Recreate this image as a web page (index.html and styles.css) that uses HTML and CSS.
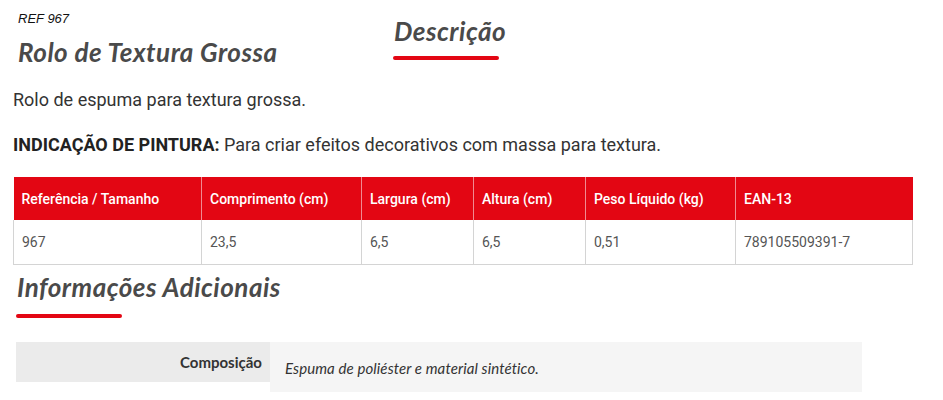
FILE: index.html
```html
<!DOCTYPE html>
<html lang="pt">
<head>
  <meta charset="UTF-8">
  <title>Rolo de Textura Grossa</title>
  <link rel="stylesheet" href="styles.css">
</head>
<body>
  <div class="topo">
    <div class="produto">
      <div class="ref">REF 967</div>
      <h1 class="titulo">Rolo de Textura Grossa</h1>
    </div>
    <div class="aba">
      <h2 class="secao">Descrição</h2>
    </div>
  </div>

  <div class="descricao">
    <p>Rolo de espuma para textura grossa.</p>
    <p><strong>INDICAÇÃO DE PINTURA:</strong> Para criar efeitos decorativos com massa para textura.</p>
  </div>

  <table class="medidas">
    <thead>
      <tr>
        <th class="c1">Referência / Tamanho</th>
        <th class="c2">Comprimento (cm)</th>
        <th class="c3">Largura (cm)</th>
        <th class="c4">Altura (cm)</th>
        <th class="c5">Peso Líquido (kg)</th>
        <th class="c6">EAN-13</th>
      </tr>
    </thead>
    <tbody>
      <tr>
        <td>967</td>
        <td>23,5</td>
        <td>6,5</td>
        <td>6,5</td>
        <td>0,51</td>
        <td>789105509391-7</td>
      </tr>
    </tbody>
  </table>

  <div class="adicionais">
    <h2 class="secao">Informações Adicionais</h2>
    <div class="atributo">
      <div class="rotulo">Composição</div>
      <div class="valor">Espuma de poliéster e material sintético.</div>
    </div>
  </div>
</body>
</html>
```

FILE: styles.css
```css
body {
  margin: 0;
  padding: 0;
  background: #fff;
  font-family: Roboto, Arial, sans-serif;
  color: #333;
}
.topo {
  display: flex;
  padding: 12px 0 0 18px;
  height: 87px;
  box-sizing: border-box;
}
.produto {
  width: 376px;
}
.ref {
  font-family: "Liberation Sans", Arial, sans-serif;
  font-style: italic;
  font-size: 13px;
  color: #111;
  line-height: 14px;
}
.secao,
.titulo {
  margin: 0;
  font-family: Lato, sans-serif;
  font-style: italic;
  font-weight: 700;
  font-size: 26px;
  letter-spacing: 0.5px;
  line-height: 30px;
  color: #4a4a4a;
}
.titulo {
  margin-top: 11px;
}
.secao {
  display: inline-block;
}
.secao::after {
  content: "";
  display: block;
  width: 106px;
  height: 4px;
  border-radius: 2px;
  background: #e30613;
}
.aba .secao {
  margin-top: 4px;
}
.aba .secao::after {
  margin: 10px 0 0 -1px;
}
.descricao {
  padding: 0 13px;
}
.descricao p {
  margin: 0 0 20px;
  font-size: 18px;
  line-height: 25px;
  color: #333;
}
.descricao strong {
  color: #222;
}
.medidas {
  margin: 0 0 0 13px;
  width: 899px;
  table-layout: fixed;
  border-collapse: collapse;
  font-size: 14px;
}
.medidas th,
.medidas td {
  box-sizing: border-box;
  height: 43px;
  padding: 0 8px;
  text-align: left;
}
.medidas th {
  background: #e30613;
  color: #fff;
  font-weight: 500;
  border-right: 1px solid #f08a91;
}
.medidas th:last-child {
  border-right: 1px solid #e30613;
}
.medidas td {
  height: 44px;
  color: #555;
  border: 1px solid #d4d4d4;
  border-top: none;
}
.c1 { width: 188px; }
.c2 { width: 160px; }
.c3 { width: 112px; }
.c4 { width: 112px; }
.c5 { width: 150px; }
.c6 { width: 177px; }
.adicionais {
  padding: 7px 0 0 17px;
}
.adicionais .secao::after {
  margin: 12px 0 0 -1px;
}
.atributo {
  display: flex;
  align-items: flex-start;
  margin: 24px 0 0 -1px;
}
.rotulo {
  width: 254px;
  box-sizing: border-box;
  height: 40px;
  line-height: 40px;
  padding-right: 8px;
  text-align: right;
  background: #ebebeb;
  font-family: Lato, sans-serif;
  font-weight: 700;
  font-size: 15px;
  color: #333;
}
.valor {
  width: 592px;
  box-sizing: border-box;
  height: 50px;
  padding: 16px 15px 0;
  line-height: 20px;
  background: #f5f5f5;
  font-family: Lato, sans-serif;
  font-style: italic;
  font-size: 15px;
  letter-spacing: 0.1px;
  color: #333;
}
```
